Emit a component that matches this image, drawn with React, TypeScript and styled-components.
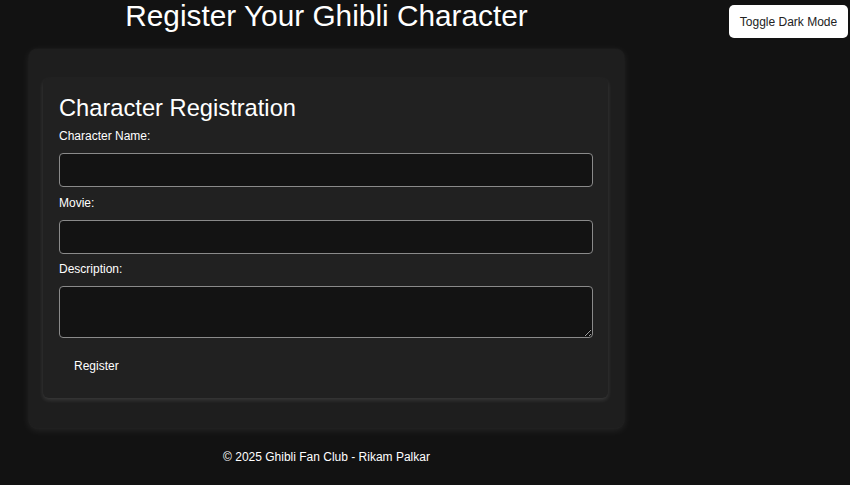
import React from "react";
import styled, { createGlobalStyle } from "styled-components";

const Global = createGlobalStyle`
  html, body {
    margin: 0;
    padding: 0;
    background: #121212;
    font-family: "Liberation Sans", Arial, sans-serif;
    color: #ffffff;
  }
  * { box-sizing: border-box; }
`;

const Page = styled.div`
  width: 850px;
  height: 485px;
  position: relative;
  overflow: hidden;
`;

const Column = styled.main`
  width: 595px;
  margin-left: 29px;
  display: flex;
  flex-direction: column;
`;

const Title = styled.h1`
  margin: -1px 0 16px;
  font-size: 29.8px;
  font-weight: 400;
  line-height: 34px;
  text-align: center;
  color: #ffffff;
`;

const Panel = styled.section`
  background: #1e1e1e;
  border-radius: 8px;
  padding: 29px 16px 30px 14px;
  box-shadow: 0 2px 8px rgba(255, 255, 255, 0.09), 0 0 2px rgba(255, 255, 255, 0.06);
`;

const Card = styled.form`
  background: #212121;
  border-radius: 6px;
  padding: 16px 15px 15px 16px;
  box-shadow: 0 2px 4px rgba(255, 255, 255, 0.13);
  display: flex;
  flex-direction: column;
`;

const CardTitle = styled.h2`
  margin: 0 0 7px;
  font-size: 23.7px;
  font-weight: 400;
  line-height: 28px;
`;

const Label = styled.label`
  display: block;
  font-size: 12px;
  line-height: 14px;
  margin-bottom: 10px;
`;

const Input = styled.input`
  display: block;
  width: 100%;
  height: 34px;
  margin: 0 0 8.5px;
  background: #131313;
  border: 1px solid #8a8a8a;
  border-radius: 4px;
  color: #fff;
  font-family: inherit;
  font-size: 12px;
  padding: 0 8px;
`;

const TextArea = styled.textarea`
  display: block;
  width: 100%;
  height: 52px;
  margin: 0 0 11px;
  background: #131313;
  border: 1px solid #8a8a8a;
  border-radius: 4px;
  color: #fff;
  font-family: inherit;
  font-size: 12px;
  padding: 6px 8px;
  resize: vertical;
`;

const SubmitButton = styled.button`
  align-self: flex-start;
  background: transparent;
  border: none;
  color: #ffffff;
  font-family: inherit;
  font-size: 12px;
  line-height: 14px;
  padding: 10px 15px;
  cursor: pointer;
`;

const Footer = styled.footer`
  margin-top: 22px;
  text-align: center;
  font-size: 12px;
  line-height: 14px;
  color: #ffffff;
`;

const ToggleButton = styled.button`
  position: absolute;
  top: 5px;
  right: 2px;
  width: 119px;
  height: 33px;
  background: #ffffff;
  color: #222222;
  border: none;
  border-radius: 5px;
  font-family: "Liberation Sans", Arial, sans-serif;
  font-size: 12px;
  padding: 0;
  cursor: pointer;
`;

export default function App() {
  return (
    <Page>
      <Global />
      <ToggleButton type="button">Toggle Dark Mode</ToggleButton>
      <Column>
        <Title>Register Your Ghibli Character</Title>
        <Panel>
          <Card onSubmit={(e) => e.preventDefault()}>
            <CardTitle>Character Registration</CardTitle>
            <Label htmlFor="name">Character Name:</Label>
            <Input id="name" type="text" />
            <Label htmlFor="movie">Movie:</Label>
            <Input id="movie" type="text" />
            <Label htmlFor="desc">Description:</Label>
            <TextArea id="desc" />
            <SubmitButton type="submit">Register</SubmitButton>
          </Card>
        </Panel>
        <Footer>© 2025 Ghibli Fan Club - Rikam Palkar</Footer>
      </Column>
    </Page>
  );
}
